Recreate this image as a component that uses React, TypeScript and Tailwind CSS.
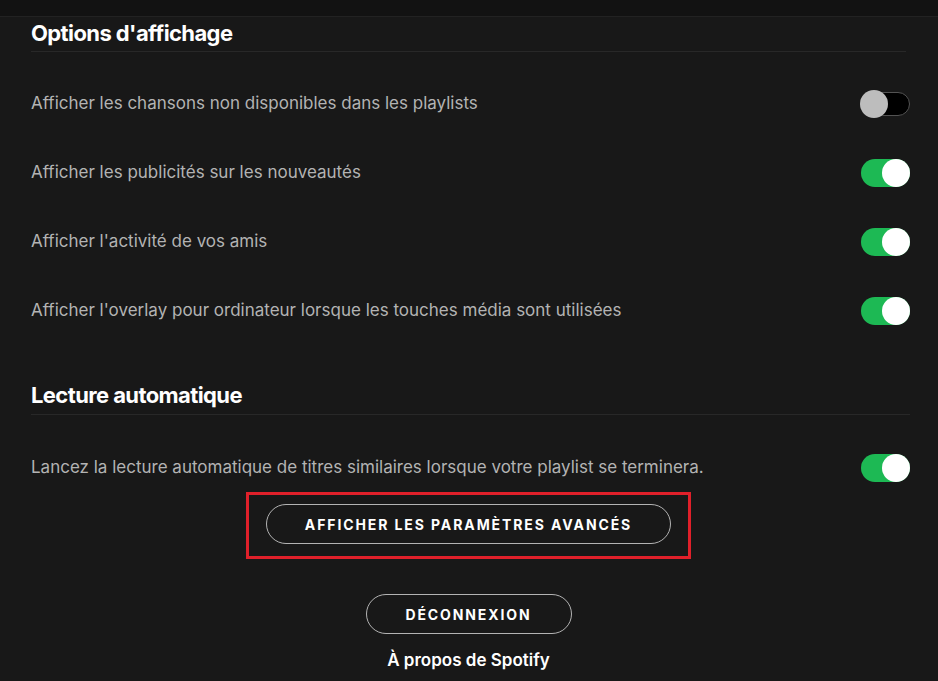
import React from "react";

const displayRows = [
  { label: "Afficher les chansons non disponibles dans les playlists", on: false },
  { label: "Afficher les publicités sur les nouveautés", on: true },
  { label: "Afficher l'activité de vos amis", on: true },
  { label: "Afficher l'overlay pour ordinateur lorsque les touches média sont utilisées", on: true },
];

const Toggle = ({ on }: { on: boolean }) =>
  on ? (
    <div className="relative h-[28px] w-[49px] rounded-full bg-[#1db954]">
      <div className="absolute right-0 top-0 h-[28px] w-[28px] rounded-full bg-white" />
    </div>
  ) : (
    <div className="relative h-[28px] w-[50px]">
      <div className="absolute right-0 top-[2px] h-[24px] w-[38px] rounded-full border border-[#535353] bg-black" />
      <div className="absolute left-0 top-0 h-[28px] w-[28px] rounded-full bg-[#bdbdbd]" />
    </div>
  );

const Row = ({ label, on }: { label: string; on: boolean }) => (
  <div className="flex h-[69px] items-center justify-between">
    <span className="text-[17px] text-[#b3b3b3]">{label}</span>
    <Toggle on={on} />
  </div>
);

export default function App() {
  return (
    <div
      className="flex h-[681px] w-[938px] flex-col overflow-hidden bg-[#181818]"
      style={{ fontFamily: "Inter, 'Noto Sans', sans-serif" }}
    >
      <div className="h-[17px] shrink-0 border-b border-[#222] bg-[#121212]" />
      <div className="flex flex-col pl-[31px] pr-[28px]">
        <h2 className="mt-[1px] pr-[6px] text-[22px] font-bold leading-[30px] tracking-[-0.6px] text-white">
          Options d'affichage
        </h2>
        <div className="mr-[4px] mt-[3px] h-px bg-[#282828]" />
        <div className="mt-[17px] flex flex-col">
          {displayRows.map((r) => (
            <Row key={r.label} label={r.label} on={r.on} />
          ))}
        </div>
        <h2 className="mt-[35px] text-[22px] font-bold leading-[30px] tracking-[-0.6px] text-white">
          Lecture automatique
        </h2>
        <div className="mt-[4px] h-px bg-[#282828]" />
        <div className="mt-[18px]">
          <Row
            label="Lancez la lecture automatique de titres similaires lorsque votre playlist se terminera."
            on={true}
          />
        </div>
        <div className="-mt-[10px] flex flex-col items-center pr-[4px]">
          <div className="border-[3px] border-[#e0202a] px-[17px] pb-[12px] pt-[9px]">
            <button className="h-[40px] w-[405px] rounded-full border border-[#b3b3b3] text-[14px] font-bold tracking-[1.9px] text-white">
              AFFICHER LES PARAMÈTRES AVANCÉS
            </button>
          </div>
          <button className="mt-[35px] h-[40px] w-[206px] rounded-full border border-[#b3b3b3] text-[14px] font-bold tracking-[1.9px] text-white">
            DÉCONNEXION
          </button>
          <div className="mt-[14px] text-[17px] font-semibold text-white">À propos de Spotify</div>
        </div>
      </div>
    </div>
  );
}
